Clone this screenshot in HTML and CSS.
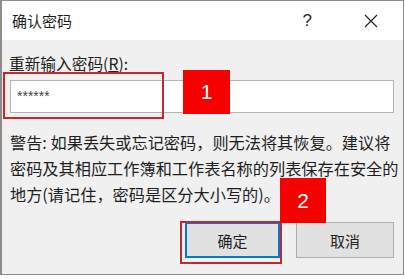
FILE: index.html
```html
<!DOCTYPE html>
<html lang="zh-CN">
<head>
    <meta charset="UTF-8">
    <meta name="viewport" content="width=device-width, initial-scale=1">
    <title>确认密码</title>
    <link rel="stylesheet" href="styles.css">
</head>
<body>
    <div class="dialog">
        <div class="titlebar">
            <span class="title">确认密码</span>
            <span class="help">?</span>
            <svg class="close" width="14" height="14" viewBox="0 0 14 14">
                <path d="M1 1 L13 13 M13 1 L1 13" stroke="#222" stroke-width="1.2" fill="none"/>
            </svg>
        </div>
        <div class="content">
            <label class="label" for="pwd">重新输入密码(<u>R</u>):</label>
            <div class="input" id="pwd">******</div>
            <p class="warning">警告: 如果丢失或忘记密码，则无法将其恢复。建议将<br>密码及其相应工作簿和工作表名称的列表保存在安全的<br>地方(请记住，密码是区分大小写的)。</p>
            <div class="buttons">
                <button class="btn btn-ok">确定</button>
                <button class="btn">取消</button>
            </div>
        </div>

        <div class="mark mark-input"></div>
        <div class="badge badge-1">1</div>
        <div class="mark mark-ok"></div>
        <div class="badge badge-2">2</div>
    </div>
</body>
</html>
```

FILE: styles.css
```css
body {
    margin: 0;
    background-color: #ffffff;
    font-family: "Noto Sans CJK SC", "Liberation Sans", sans-serif;
    color: #1e1e1e;
}

.dialog {
    position: relative;
    width: 401px;
    height: 273px;
    border: 1px solid #8c8c8c;
    border-left-width: 2px;
    background-color: #f0f0f0;
}

.titlebar {
    display: flex;
    align-items: center;
    height: 39px;
    padding-left: 10px;
    background-color: #ffffff;
}

.title {
    flex: 1;
    font-size: 15px;
}

.help {
    font-family: "Liberation Sans", sans-serif;
    font-size: 17px;
    margin-right: 52px;
}

.close {
    margin-right: 25px;
}

.content {
    padding: 13px 9px 0 7px;
}

.label {
    display: block;
    font-size: 15.7px;
    line-height: 22px;
    height: 22px;
}

.input {
    height: 31px;
    margin: 5px 0 0 1px;
    border: 1px solid #b4b4b4;
    background-color: #ffffff;
    padding-left: 6px;
    font-family: "Liberation Sans", sans-serif;
    font-size: 14px;
    line-height: 31px;
    color: #444;
}

.warning {
    margin: 16px 0 0 1px;
    font-size: 16.2px;
    line-height: 26px;
    white-space: nowrap;
}

.buttons {
    display: flex;
    justify-content: flex-end;
    gap: 16px;
    margin-top: 15px;
}

.btn {
    height: 36px;
    border: 1px solid #adadad;
    background-color: #e1e1e1;
    font-family: "Noto Sans CJK SC", sans-serif;
    font-size: 15px;
    color: #1e1e1e;
    padding: 0;
}

.btn-ok {
    width: 95px;
    border: 2px solid #0078d7;
}

.btn + .btn {
    width: 98px;
}

.mark {
    position: absolute;
    border: 2px solid #c8262e;
}

.mark-input {
    left: 1px;
    top: 71px;
    width: 157px;
    height: 43px;
}

.mark-ok {
    left: 178px;
    top: 220px;
    width: 98px;
    height: 39px;
}

.badge {
    position: absolute;
    display: flex;
    align-items: center;
    justify-content: center;
    background-color: #f60000;
    color: #ffffff;
    font-family: "Liberation Sans", sans-serif;
    font-size: 21px;
}

.badge-1 {
    left: 181px;
    top: 69px;
    width: 47px;
    height: 44px;
}

.badge-2 {
    left: 278px;
    top: 177px;
    width: 46px;
    height: 45px;
}
```
